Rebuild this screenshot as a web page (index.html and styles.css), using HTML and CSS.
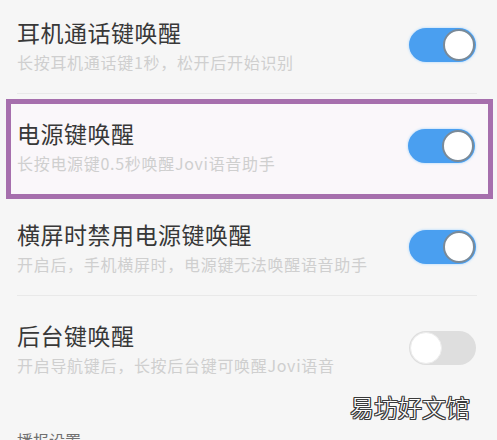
FILE: index.html
```html
<!DOCTYPE html>
<html lang="zh-CN">
<head>
<meta charset="utf-8">
<title>语音唤醒设置</title>
<link rel="stylesheet" href="styles.css">
</head>
<body>
<div class="page">
  <div class="row row-first">
    <div class="text">
      <div class="title">耳机通话键唤醒</div>
      <div class="sub">长按耳机通话键1秒，松开后开始识别</div>
    </div>
    <div class="toggle on"><span class="knob"></span></div>
  </div>
  <div class="sep"></div>
  <div class="highlight">
    <div class="row row-box">
      <div class="text">
        <div class="title">电源键唤醒</div>
        <div class="sub">长按电源键0.5秒唤醒Jovi语音助手</div>
      </div>
      <div class="toggle on"><span class="knob"></span></div>
    </div>
  </div>
  <div class="row row-third">
    <div class="text">
      <div class="title">横屏时禁用电源键唤醒</div>
      <div class="sub">开启后，手机横屏时，电源键无法唤醒语音助手</div>
    </div>
    <div class="toggle on"><span class="knob"></span></div>
  </div>
  <div class="sep"></div>
  <div class="row row-fourth">
    <div class="text">
      <div class="title">后台键唤醒</div>
      <div class="sub">开启导航键后，长按后台键可唤醒Jovi语音</div>
    </div>
    <div class="toggle off"><span class="knob"></span></div>
  </div>
  <div class="section">播报设置</div>
  <div class="watermark">易坊好文馆</div>
</div>
</body>
</html>
```

FILE: styles.css
```css
html, body {
  margin: 0;
  padding: 0;
  background: #f6f6f6;
}
body {
  font-family: "Noto Sans CJK SC", "Noto Sans", sans-serif;
  width: 497px;
  height: 440px;
  overflow: hidden;
}
.page {
  position: relative;
  width: 497px;
  height: 440px;
  overflow: hidden;
  display: flex;
  flex-direction: column;
}
.page > * {
  flex: none;
}
.row {
  display: flex;
  align-items: center;
  justify-content: space-between;
  box-sizing: border-box;
  padding-left: 17px;
  padding-right: 21px;
}
.row-first {
  height: 93px;
  padding-bottom: 3px;
}
.row-third {
  height: 96px;
}
.row-fourth {
  height: 103px;
}
.text {
  display: flex;
  flex-direction: column;
  gap: 4px;
}
.title {
  font-size: 23px;
  line-height: 30px;
  letter-spacing: 0.5px;
  color: #383838;
  white-space: nowrap;
}
.sub {
  font-size: 16px;
  line-height: 22px;
  letter-spacing: 0.7px;
  color: #cfcfcf;
  white-space: nowrap;
}
.sep {
  height: 1px;
  margin: 0 20px 0 17px;
  background: #e9e9e9;
}
.highlight {
  margin: 5px 4px 0 6px;
  height: 100px;
  box-sizing: border-box;
  border: 5px solid #a66fad;
  background: #faf7fa;
}
.row-box {
  height: 90px;
  padding-left: 6px;
  padding-right: 13px;
  padding-bottom: 7px;
}
.toggle {
  position: relative;
  width: 67px;
  height: 34px;
  border-radius: 17px;
  flex: none;
}
.toggle.on {
  background: #4a9ff0;
  box-shadow: 0 0 2px 1px #cfe6fb;
}
.toggle.off {
  background: #dedede;
}
.knob {
  position: absolute;
  top: 1px;
  width: 32px;
  height: 32px;
  box-sizing: border-box;
  border-radius: 50%;
  background: #ffffff;
}
.toggle.on .knob {
  right: 1px;
  border: 2px solid #7a8a98;
}
.toggle.off .knob {
  left: 1px;
  border: 1px solid #ececec;
}
.section {
  margin-top: 30px;
  padding-left: 17px;
  font-size: 16px;
  line-height: 22px;
  color: #707070;
}
.watermark {
  position: absolute;
  left: 350px;
  top: 393px;
  font-size: 24px;
  line-height: 28px;
  font-weight: 300;
  color: #ffffff;
  text-shadow:
    1px 0 0 #3a3a3a, -1px 0 0 #3a3a3a, 0 1px 0 #3a3a3a, 0 -1px 0 #3a3a3a,
    1px 1px 0 #3a3a3a, -1px -1px 0 #3a3a3a, 1px -1px 0 #3a3a3a, -1px 1px 0 #3a3a3a;
  white-space: nowrap;
}
```
